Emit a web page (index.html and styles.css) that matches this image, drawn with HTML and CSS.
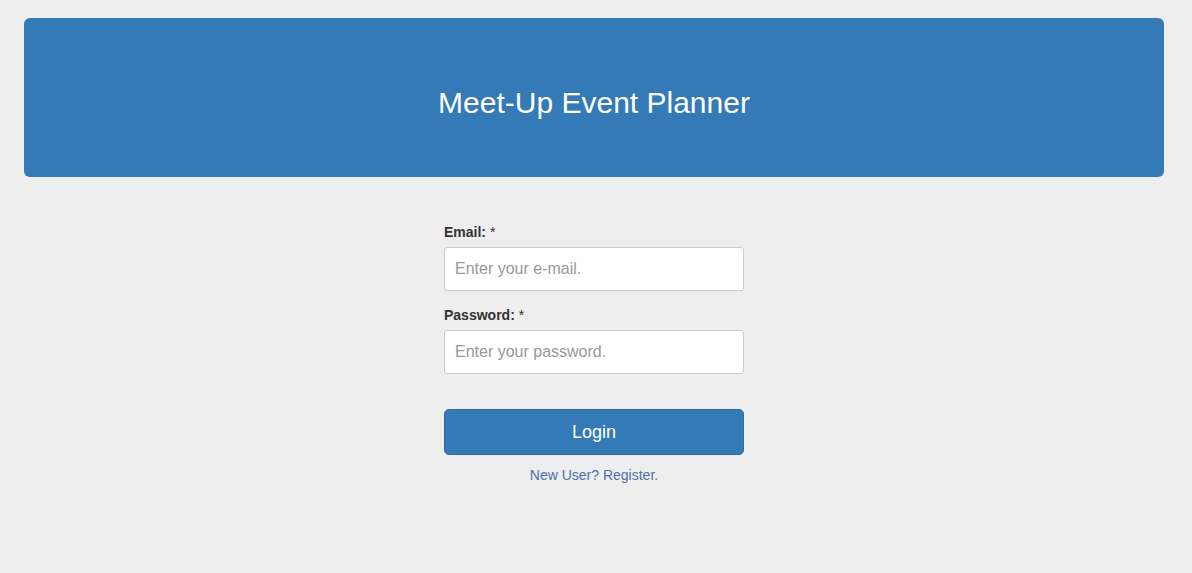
FILE: index.html
```html
<!DOCTYPE html>
<html>
<head>
<meta charset="utf-8">
<title>Meet-Up Event Planner</title>
<link rel="stylesheet" href="styles.css">
</head>
<body>
<div class="container">
  <header class="banner">
    <h1 class="banner-title">Meet-Up Event Planner</h1>
  </header>
  <form class="login-form">
    <div class="field">
      <label class="field-label" for="email">Email: <span class="req">*</span></label>
      <input class="field-input" id="email" type="email" placeholder="Enter your e-mail.">
    </div>
    <div class="field">
      <label class="field-label" for="password">Password: <span class="req">*</span></label>
      <input class="field-input" id="password" type="password" placeholder="Enter your password.">
    </div>
    <button class="btn-login" type="button">Login</button>
    <a class="register-link" href="#">New User? Register.</a>
  </form>
</div>
</body>
</html>
```

FILE: styles.css
```css
* { box-sizing: border-box; }
html, body {
  margin: 0;
  padding: 0;
  background: #eeeeee;
  font-family: "Liberation Sans", Arial, sans-serif;
  color: #333333;
}
.container {
  width: 1140px;
  margin: 0 0 0 24px;
  padding-top: 18px;
}
.banner {
  height: 159px;
  padding-top: 10px;
  background: #337ab7;
  border-radius: 6px;
  display: flex;
  align-items: center;
  justify-content: center;
}
.banner-title {
  margin: 0;
  color: #ffffff;
  font-weight: normal;
  font-size: 30px;
  line-height: 1.1;
}
.login-form {
  width: 300px;
  margin: 47px auto 0;
  display: flex;
  flex-direction: column;
}
.field {
  display: flex;
  flex-direction: column;
  margin-bottom: 16px;
}
.field-label {
  font-size: 14px;
  font-weight: bold;
  line-height: 17px;
  margin-bottom: 6px;
  color: #333333;
}
.req {
  font-weight: normal;
  color: #333;
}
.field-input {
  height: 44px;
  border: 1px solid #cccccc;
  border-radius: 3px;
  padding: 0 10px;
  font-family: "Liberation Sans", Arial, sans-serif;
  font-size: 16px;
  color: #555;
  background: #fff;
}
.field-input::placeholder { color: #999999; }
.btn-login {
  margin-top: 19px;
  height: 46px;
  border: 1px solid #2e6da4;
  border-radius: 5px;
  background: #337ab7;
  color: #ffffff;
  font-family: "Liberation Sans", Arial, sans-serif;
  font-size: 18px;
  cursor: pointer;
}
.register-link {
  margin-top: 12px;
  text-align: center;
  font-size: 14px;
  color: #4a72a9;
  text-decoration: none;
}
```
